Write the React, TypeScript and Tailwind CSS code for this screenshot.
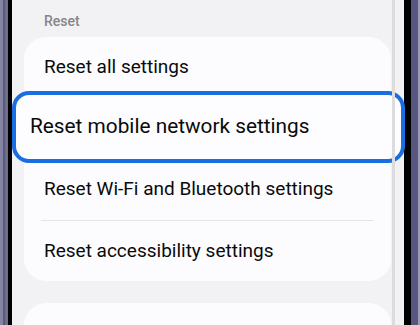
export default function App() {
  return (
    <div className="flex h-[325px] w-[420px] overflow-hidden bg-[#f2f2f4]" style={{ fontFamily: "Roboto, 'Noto Sans', sans-serif" }}>
      {/* left bezel */}
      <div className="flex h-full shrink-0">
        <div className="w-[3px] bg-[#8585a3]" />
        <div className="w-[2px] bg-[#5a5a7c]" />
        <div className="w-[3px] bg-[#6e6e90]" />
        <div className="w-[4px] bg-black" />
      </div>

      {/* screen */}
      <div className="relative flex-1 pl-[12px]">
        <p className="pl-[20px] pt-[11px] text-[14px] font-medium text-[#85858a]">Reset</p>

        <div className="mt-[5px] w-[367px] rounded-[22px] bg-[#fcfcfe]">
          <div className="flex h-[61px] items-center px-[20px] text-[19px] text-[#0a0a0a]">Reset all settings</div>

          <div className="relative h-[61px]">
            <div className="absolute -left-[12px] -right-[14px] -top-[7px] -bottom-[4px] flex items-center rounded-[17px] border-[4px] border-[#1a6ee2] bg-[#fdfdff] pl-[14px] text-[20.8px] text-[#0a0a0a]">
              Reset mobile network settings
            </div>
          </div>

          <div className="flex h-[61px] items-center px-[20px] text-[19px] text-[#0a0a0a]">Reset Wi-Fi and Bluetooth settings</div>
          <div className="mx-[17px] h-px bg-[#e4e4e6]" />
          <div className="flex h-[60px] items-center px-[20px] text-[19px] text-[#0a0a0a]">Reset accessibility settings</div>
        </div>

        <div className="mt-[22px] h-[40px] w-[367px] rounded-t-[22px] bg-[#fcfcfe]" />

        {/* scroll indicator */}
        <div className="absolute right-[9px] top-0 h-full w-[3px] bg-[#dcdcde]" />
      </div>

      {/* right bezel */}
      <div className="flex h-full shrink-0">
        <div className="w-[7px] bg-black" />
        <div className="w-[7px] bg-[#565680]" />
        <div className="w-[2px] bg-[#9a9ab0]" />
      </div>
    </div>
  );
}
